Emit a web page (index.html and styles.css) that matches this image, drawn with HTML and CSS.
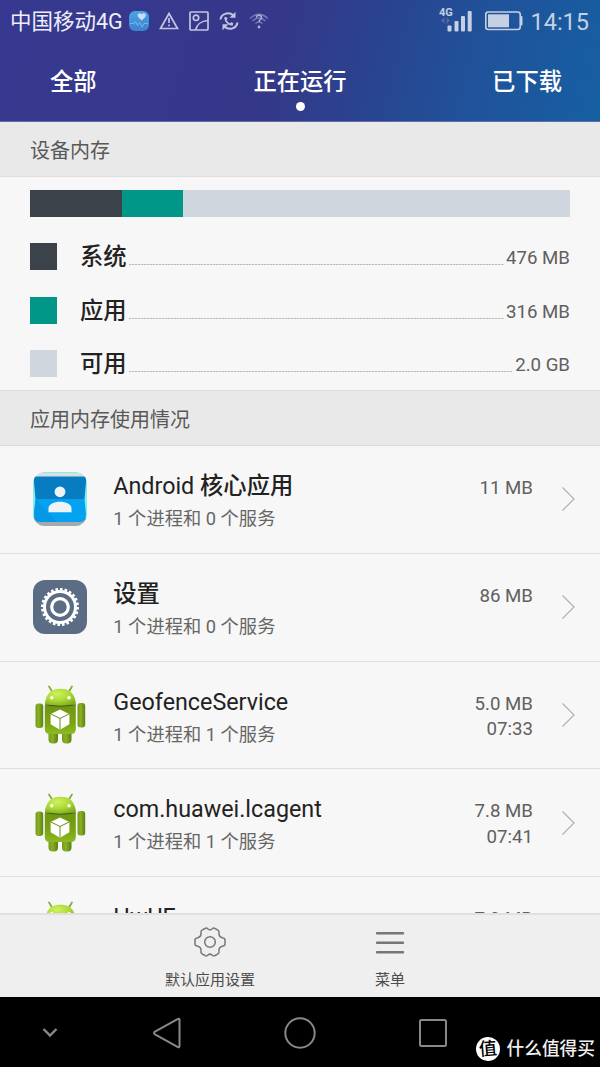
FILE: index.html
```html
<!DOCTYPE html>
<html lang="zh-CN">
<head>
<meta charset="utf-8">
<title>正在运行</title>
<link rel="stylesheet" href="styles.css">
</head>
<body>
<svg class="defs" width="0" height="0" aria-hidden="true">
  <defs>
    <linearGradient id="limb" x1="0" x2="1" y1="0" y2="0"><stop offset="0" stop-color="#749a18"/><stop offset=".4" stop-color="#8ab024"/><stop offset="1" stop-color="#5a8014"/></linearGradient>
    <linearGradient id="torso" x1="0" x2="0" y1="0" y2="1"><stop offset="0" stop-color="#6e9612"/><stop offset=".6" stop-color="#79a310"/><stop offset="1" stop-color="#8dba25"/></linearGradient>
    <radialGradient id="head" cx=".4" cy=".3" r=".8"><stop offset="0" stop-color="#cdf35e"/><stop offset=".5" stop-color="#abd936"/><stop offset="1" stop-color="#79a51a"/></radialGradient>
    <linearGradient id="health" x1="0" x2="0" y1="0" y2="1"><stop offset="0" stop-color="#48a6e2"/><stop offset="1" stop-color="#3e7fcf"/></linearGradient>
    <clipPath id="tile"><rect width="54" height="54" rx="12"/></clipPath>
  </defs>
  <symbol id="android" viewBox="-1.5 0 54 60">
    <path d="M14.500 1.500 18.500 8M37.500 1.500 33.500 8" stroke="#86a838" stroke-width="1.700" stroke-linecap="round"/>
    <rect x="14" y="45" width="9.500" height="13.500" rx="4" fill="url(#limb)"/>
    <rect x="27.500" y="45" width="9.500" height="13.500" rx="4" fill="url(#limb)"/>
    <rect x="1" y="18.500" width="7.700" height="24.500" rx="3" fill="url(#limb)"/>
    <rect x="43" y="18" width="7.700" height="24.500" rx="3" fill="url(#limb)"/>
    <path d="M10.300 20.500h31v23.500q0 5-5 5H15.300q-5 0-5-5z" fill="url(#torso)"/>
    <path d="M10.300 19.500C11.500 8 17 3.800 26 3.800S40.500 8 41.500 19.500q-15.500 2.500-31.200 0z" fill="url(#head)"/>
    <path d="M10.500 20q15.500 2.500 31 0" fill="none" stroke="#3f590a" stroke-width="1"/>
    <circle cx="17.300" cy="12.800" r="1.700" fill="#fff"/><circle cx="34.500" cy="12.800" r="1.700" fill="#fff"/>
    <path d="m25.500 24.500 9.400 4.400v10.300L25.500 44.800l-9.400-5.600V28.900z" fill="#fff"/>
    <path d="m16.300 28.900 9.200 4.600 9.200-4.600M25.500 33.500v11" fill="none" stroke="#668d12" stroke-width="1"/>
  </symbol>
  <symbol id="chevron" viewBox="0 0 14 26"><path d="m1.500 1.500 11.500 11.500L1.500 24.500" fill="none" stroke="#b0b0b0" stroke-width="1.200"/></symbol>
</svg>

<div class="screen">
  <header class="header">
    <div class="status">
      <span class="carrier">中国移动4G</span>
      <div class="notices">
        <svg width="20" height="20" viewBox="0 0 20 20"><rect width="20" height="20" rx="6" fill="url(#health)"/><path d="M12.700 9.500C10.500 7.600 8.600 6 8.600 4.300c0-2.400 3-2.800 4.100-.8 1.100-2 4.100-1.600 4.100.8 0 1.700-1.900 3.300-4.100 5.200z" fill="#cbdcf4"/><path d="M1 12.500h4l1.500-2 2 4 2-3 2.500 4.500 2-3.500H19" fill="none" stroke="#82c0ec" stroke-width=".8"/></svg>
        <svg width="20" height="20" viewBox="0 0 20 20" fill="none" stroke="#c3c4df" stroke-width="1.700"><path d="M10 2.500 18.500 17.500h-17z"/><path d="M10 7v5M10 13.500v1.700"/></svg>
        <svg width="20" height="20" viewBox="0 0 20 20" fill="none" stroke="#c3c4df" stroke-width="1.700"><rect x="1" y="1" width="18" height="18" rx="1"/><circle cx="7" cy="6.800" r="2.700"/><path d="M6.500 19C7.500 14 12 10 19 9.500"/></svg>
        <svg width="20" height="20" viewBox="0 0 20 20" fill="none" stroke="#c3c4df" stroke-width="2"><path d="M1.500 8.500C2 3 9 .3 14.500 4.200M18.500 11.500C17.500 17.500 10.500 19.800 5.500 15.800"/><path d="M16.500.8v6h-6zM3.500 19.200v-6h6z" fill="#c3c4df" stroke="none"/><path d="M6.300 6.300C6 10.500 9.500 14 13.800 13.700" stroke-width="1.600"/><path d="m6 6.500 1.800 2M11.700 12l2 1.500" stroke-width="2.400"/></svg>
        <svg width="20" height="20" viewBox="0 0 20 20" fill="none" stroke="#7779b8" stroke-width="1.500"><path d="M1 7.500Q10-.8 19 7.500M3.500 10Q10 4 16.500 10M6.500 12.500Q10 9.500 13.500 12.500"/><path d="M7.500 6.500c0-3 5-3 5 0 0 2-2.500 2-2.500 4.500" stroke="#aeb0d4"/><circle cx="10" cy="16" r="1.400" fill="#aeb0d4" stroke="none"/></svg>
      </div>
      <div class="system">
        <svg width="34" height="28" viewBox="0 0 34 28" fill="#c5d0e3"><text x="0" y="9" class="net">4G</text><path d="m5.500 10-3.500 3.500L5.500 17zM7.500 10l3.500 3.500L7.500 17z" fill="#59669e"/><rect x="8.500" y="18.500" width="4" height="6" rx="1"/><rect x="15.500" y="14" width="4" height="10.500" rx="1"/><rect x="22" y="9" width="4" height="15.500" rx="1"/><rect x="28.700" y="4" width="4" height="20.500" rx="1"/></svg>
        <svg class="battery" width="38" height="20" viewBox="0 0 38 20"><rect x=".8" y="1" width="34.400" height="17.500" rx="2.500" fill="none" stroke="#c5d0e3" stroke-width="1.600"/><rect x="3" y="3.300" width="21" height="13" fill="#c5d0e3"/><path d="M35 5h1.500q1 0 1 1v7.500q0 1-1 1H35z" fill="#c5d0e3"/></svg>
        <span class="clock">14:15</span>
      </div>
    </div>
    <nav class="tabs">
      <span class="tab">全部</span>
      <span class="tab tab-active">正在运行</span>
      <span class="tab tab-right">已下载</span>
    </nav>
  </header>

  <main class="content">
    <h2 class="section">设备内存</h2>
    <section class="memory">
      <div class="bar"><i class="system-color"></i><i class="apps-color"></i></div>
      <div class="legend">
        <div class="legend-row"><i class="swatch system-color"></i><span class="name">系统</span><i class="leader"></i><span class="amount">476 MB</span></div>
        <div class="legend-row"><i class="swatch apps-color"></i><span class="name">应用</span><i class="leader"></i><span class="amount">316 MB</span></div>
        <div class="legend-row"><i class="swatch free-color"></i><span class="name">可用</span><i class="leader leader-free"></i><span class="amount">2.0 GB</span></div>
      </div>
    </section>
    <h2 class="section section-apps">应用内存使用情况</h2>
    <section class="apps">
      <article class="app">
        <svg class="icon" width="54" height="54" viewBox="0 0 54 54"><g clip-path="url(#tile)"><rect width="54" height="54" fill="#7ff0ef"/><path d="M5 1h44l4 4H1z" fill="#d9dfdf"/><path d="M0 46h54v8H0z" fill="#a6a9ab"/><path d="M2.500 27h49L53 42q0 8-6 8H7q-6 0-6-8z" fill="#06a2f2"/><path d="M.5 4.500h53L51.500 27h-49z" fill="#087cc1"/><path d="m2.500 27 22 23H7q-6 0-6-8z" fill="#0798e5"/></g><circle cx="27" cy="19.800" r="5.400" fill="#eef3f6"/><path d="M15.500 40.200v-3.700c0-9 23-9 23 0v3.700z" fill="#eef3f6"/></svg>
        <div class="info"><div class="title">Android <b>核心应用</b></div><div class="detail">1 个进程和 0 个服务</div></div>
        <div class="usage">11 MB</div>
        <svg class="chevron" width="14" height="26"><use href="#chevron"/></svg>
      </article>
      <article class="app">
        <svg class="icon" width="54" height="54" viewBox="0 0 54 54" fill="none" stroke="#fff"><rect width="54" height="54" rx="12" fill="#5b6d84" stroke="none"/><circle cx="27" cy="27" r="15.500" stroke-width="3"/><circle cx="27" cy="27" r="17.700" stroke-width="2.600" pathLength="96" stroke-dasharray="2.300 1.700"/><circle cx="27" cy="27" r="8.300" stroke-width="3.200"/></svg>
        <div class="info"><div class="title"><b>设置</b></div><div class="detail">1 个进程和 0 个服务</div></div>
        <div class="usage">86 MB</div>
        <svg class="chevron" width="14" height="26"><use href="#chevron"/></svg>
      </article>
      <article class="app">
        <svg class="icon" width="54" height="60"><use href="#android"/></svg>
        <div class="info"><div class="title">GeofenceService</div><div class="detail">1 个进程和 1 个服务</div></div>
        <div class="usage">5.0 MB<br>07:33</div>
        <svg class="chevron" width="14" height="26"><use href="#chevron"/></svg>
      </article>
      <article class="app">
        <svg class="icon" width="54" height="60"><use href="#android"/></svg>
        <div class="info"><div class="title">com.huawei.lcagent</div><div class="detail">1 个进程和 1 个服务</div></div>
        <div class="usage">7.8 MB<br>07:41</div>
        <svg class="chevron" width="14" height="26"><use href="#chevron"/></svg>
      </article>
      <article class="app">
        <svg class="icon" width="54" height="60"><use href="#android"/></svg>
        <div class="info"><div class="title">HwUE</div></div>
        <div class="usage">7.9 MB</div>
      </article>
    </section>
  </main>

  <footer class="toolbar">
    <div class="action"><svg width="34" height="34" viewBox="0 0 34 34" fill="none" stroke="#777" stroke-width="1.500" stroke-linejoin="round"><path d="M12 3.500Q13.500 2.500 15 4q2 1.700 4 0 1.500-1.500 3-.5l3 1.700q1.500.8 1 2.800-.4 3.800 3.300 4.700 2.700.5 2.700 2.300v4q0 1.800-2.700 2.300-3.700.9-3.300 4.700.5 2-1 2.800l-3 1.700q-1.500 1-3-.5-2-1.700-4 0-1.500 1.500-3 .5l-3-1.700q-1.500-.8-1-2.800.4-3.800-3.300-4.700Q2 20.800 2 19v-4q0-1.800 2.700-2.300Q8.400 11.800 8 8q-.5-2 1-2.800z"/><circle cx="17" cy="17" r="5.300"/></svg><span>默认应用设置</span></div>
    <div class="action"><svg width="34" height="34" viewBox="0 0 34 34" fill="none" stroke="#777" stroke-width="2.400" stroke-linecap="round"><path d="M4 8.300h26M4 17.700h26M4 27.200h26"/></svg><span>菜单</span></div>
  </footer>

  <nav class="navbar">
    <svg width="16" height="12" viewBox="0 0 16 12" fill="none" stroke="#888" stroke-width="2.400"><path d="m1.500 2 6.500 6.500L14.500 2"/></svg>
    <svg width="32" height="34" viewBox="0 0 32 34" fill="none" stroke="#888" stroke-width="2" stroke-linejoin="round"><path d="M28.500 4Q28.500 2 26.500 3.200L4 15.700Q2 17 4 18.300l22.500 12.500q2 1.200 2-.8z"/></svg>
    <svg width="34" height="34" viewBox="0 0 34 34" fill="none" stroke="#888" stroke-width="2"><circle cx="17" cy="17" r="14.700"/></svg>
    <svg width="30" height="30" viewBox="0 0 30 30" fill="none" stroke="#888" stroke-width="2"><rect x="2" y="2" width="26" height="26" rx="1.500"/></svg>
    <div class="watermark"><span class="seal">值</span><span>什么值得买</span></div>
  </nav>
</div>
</body>
</html>
```
FILE: styles.css
```css
* { box-sizing: border-box; }
body { margin: 0; font-family: Roboto, "Noto Sans CJK SC", sans-serif; }
.defs { position: absolute; }
i { display: block; }
b { font-weight: 500; }
svg { display: block; flex: none; }

.screen { width: 600px; height: 1067px; display: flex; flex-direction: column; overflow: hidden; background: #f7f7f7; }

.header { height: 122px; flex: none; color: #fff; background: linear-gradient(105deg, #36398f 0%, #353889 46%, #2a438f 61%, #20529a 78%, #165fa3 100%); border-bottom: 1px solid #6669aa; }
.status { height: 42px; display: flex; align-items: center; padding: 0 11px 0 10px; color: #eeeef8; }
.carrier { font-size: 21.5px; line-height: 42px; padding-top: 2px; width: 119px; white-space: nowrap; }
.notices { display: flex; gap: 10px; }
.system { display: flex; align-items: center; margin-left: auto; color: #c5d0e3; }
.net { font: 700 11px Roboto, sans-serif; }
.battery { margin-left: 12px; }
.clock { font-size: 23.5px; line-height: 42px; margin-left: 7px; padding-top: 2px; }
.tabs { height: 79px; display: grid; grid-template-columns: 150px 300px 150px; padding-top: 20px; font-size: 23.3px; line-height: 40px; font-weight: 500; }
.tab { padding-left: 50px; }
.tab-active { padding: 0; text-align: center; }
.tab-active::after { content: ""; display: block; width: 9px; height: 9px; margin: 0 auto; border-radius: 50%; background: #fff; }
.tab-right { padding: 0 38px 0 0; text-align: right; }

.content { flex: 1; min-height: 0; overflow: hidden; }
.section { margin: 0; height: 55px; padding: 0 30px; line-height: 58px; font-size: 20px; font-weight: 400; color: #595959; background: #e9e9e9; border-bottom: 1px solid #dedede; }
.section-apps { height: 56px; border-top: 1px solid #dedede; border-bottom-color: #d9d9d9; }

.memory { height: 213px; padding: 13px 30px 0; }
.bar { height: 27px; display: flex; background: #cfd6dd; }
.bar .system-color { width: 92px; }
.bar .apps-color { width: 61px; }
.system-color { background: #3b4249; }
.apps-color { background: #009688; }
.free-color { background: #cfd6dd; }
.legend { padding-top: 13.3px; }
.legend-row { height: 53.3px; display: flex; align-items: center; }
.swatch { width: 27px; height: 27px; margin-right: 23px; }
.name { font-size: 23.3px; line-height: 40px; padding-top: 1px; font-weight: 500; color: #222; }
.leader { flex: 1; height: 1px; margin: 16px 2px 0; background: repeating-linear-gradient(90deg, #bcbcbc 0 2px, #dcdcdc 2px 3px); }
.leader-free { margin-right: 3px; }
.amount { font-size: 18.67px; line-height: 30px; padding-top: 3px; color: #606060; }

.app { height: 107.8px; display: flex; align-items: center; padding: 0 25px 0 33px; border-bottom: 1px solid #dedede; }
.info { margin-left: 26.3px; align-self: flex-start; padding-top: 22px; }
.title { font-size: 23.3px; line-height: 36px; color: #222; white-space: nowrap; }
.detail { font-size: 18.3px; line-height: 30px; color: #666; white-space: nowrap; }
.usage { margin-left: auto; align-self: flex-start; padding-top: 30px; font-size: 18.67px; line-height: 25.5px; text-align: right; color: #606060; }
.chevron { margin-left: 28px; }
.app:last-child .usage { margin-right: 42px; }

.toolbar { height: 84px; flex: none; display: flex; justify-content: center; background: #efefef; border-top: 2px solid #e0e0e0; }
.action { width: 180px; display: flex; flex-direction: column; align-items: center; padding-top: 10px; font-size: 15px; line-height: 24px; color: #4c4c4c; }
.action span { margin-top: 9px; }

.navbar { height: 70px; flex: none; display: flex; align-items: center; padding: 1px 5px 0 42px; background: #000; }
.navbar svg + svg { margin-left: 93px; }
.navbar svg:nth-of-type(3) { margin-left: 100px; }
.navbar svg:nth-of-type(4) { margin-left: 101px; }
.watermark { display: flex; align-items: center; gap: 7px; margin: 33px 0 0 auto; color: #f0f0f0; font-size: 17.7px; font-weight: 500; line-height: 24px; white-space: nowrap; }
.seal { width: 24px; height: 24px; border-radius: 50%; background: #fff; color: #000; font-size: 18px; line-height: 23px; text-align: center; font-weight: 500; transform: rotate(-5deg); }
```
